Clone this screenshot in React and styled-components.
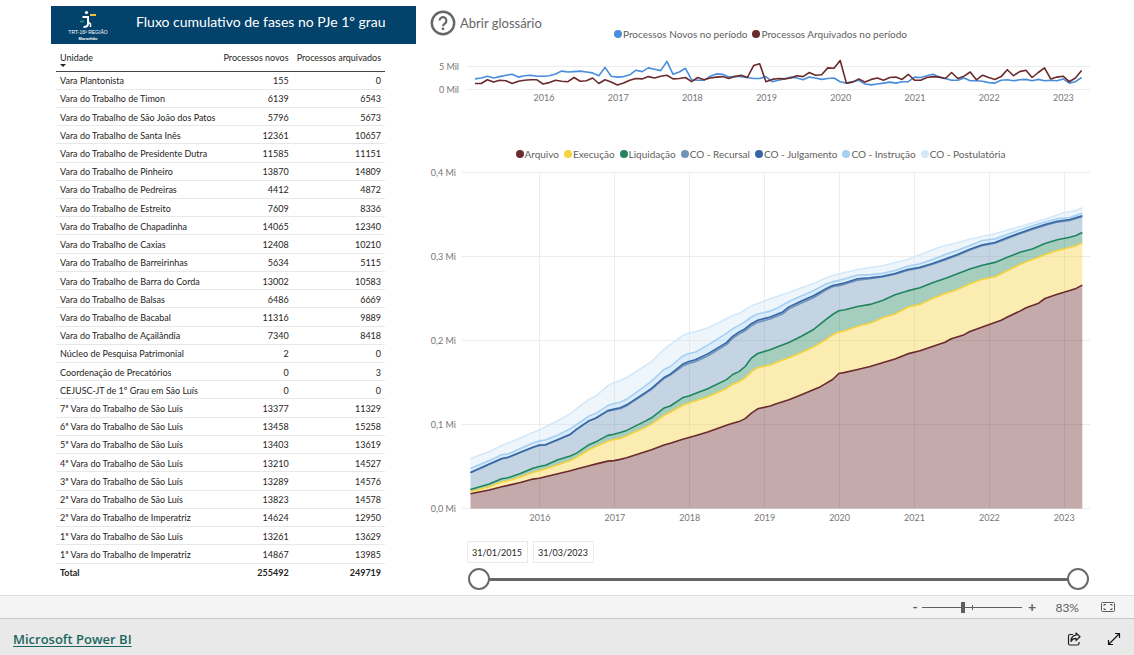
import React, { useState } from "react";
import styled, { createGlobalStyle } from "styled-components";

const units = [
  ["Vara Plantonista", 155, 0],
  ["Vara do Trabalho de Timon", 6139, 6543],
  ["Vara do Trabalho de São João dos Patos", 5796, 5673],
  ["Vara do Trabalho de Santa Inês", 12361, 10657],
  ["Vara do Trabalho de Presidente Dutra", 11585, 11151],
  ["Vara do Trabalho de Pinheiro", 13870, 14809],
  ["Vara do Trabalho de Pedreiras", 4412, 4872],
  ["Vara do Trabalho de Estreito", 7609, 8336],
  ["Vara do Trabalho de Chapadinha", 14065, 12340],
  ["Vara do Trabalho de Caxias", 12408, 10210],
  ["Vara do Trabalho de Barreirinhas", 5634, 5115],
  ["Vara do Trabalho de Barra do Corda", 13002, 10583],
  ["Vara do Trabalho de Balsas", 6486, 6669],
  ["Vara do Trabalho de Bacabal", 11316, 9889],
  ["Vara do Trabalho de Açailândia", 7340, 8418],
  ["Núcleo de Pesquisa Patrimonial", 2, 0],
  ["Coordenação de Precatórios", 0, 3],
  ["CEJUSC-JT de 1º Grau em São Luís", 0, 0],
  ["7ª Vara do Trabalho de São Luís", 13377, 11329],
  ["6ª Vara do Trabalho de São Luís", 13458, 15258],
  ["5ª Vara do Trabalho de São Luís", 13403, 13619],
  ["4ª Vara do Trabalho de São Luís", 13210, 14527],
  ["3ª Vara do Trabalho de São Luís", 13289, 14576],
  ["2ª Vara do Trabalho de São Luís", 13823, 14578],
  ["2ª Vara do Trabalho de Imperatriz", 14624, 12950],
  ["1ª Vara do Trabalho de São Luís", 13261, 13629],
  ["1ª Vara do Trabalho de Imperatriz", 14867, 13985],
];

const years = [2016, 2017, 2018, 2019, 2020, 2021, 2022, 2023];

// thousands per month, jan/2015 to mar/2023
const novos = [
  2.3, 2.5, 2.9, 2.5, 2.8, 3.1, 3.3, 2.7, 3.0, 3.1, 2.9, 2.9, 3.0, 3.4, 4.0, 3.8, 3.9, 4.0, 3.8, 3.6,
  3.0, 4.8, 2.9, 2.7, 2.8, 3.2, 4.2, 3.9, 4.7, 4.4, 4.1, 6.1, 3.3, 3.8, 4.6, 2.1, 2.0, 2.0, 2.9, 3.4,
  3.3, 2.7, 2.9, 2.8, 2.6, 2.4, 2.4, 2.8, 1.7, 2.0, 2.3, 2.7, 2.5, 2.1, 2.7, 2.5, 2.2, 2.4, 2.5, 1.7,
  1.4, 1.7, 2.0, 1.2, 1.0, 1.2, 1.4, 1.6, 1.4, 1.7, 1.7, 2.7, 2.6, 3.0, 3.3, 2.7, 2.4, 2.0, 2.0, 2.5,
  1.9, 1.9, 1.8, 1.5, 1.4, 2.0, 2.1, 1.9, 2.1, 2.2, 1.9, 2.2, 1.9, 2.0, 1.9, 2.3, 1.4, 1.7, 2.6,
];
const arquivados = [
  1.3, 1.3, 2.1, 1.6, 2.0, 1.9, 1.3, 1.8, 2.0, 2.1, 2.1, 1.2, 1.5, 2.0, 1.8, 1.7, 2.6, 1.8, 1.9, 2.5,
  1.3, 2.1, 1.6, 1.0, 1.4, 2.0, 2.4, 2.3, 2.8, 2.5, 2.9, 3.1, 2.3, 2.4, 2.6, 1.7, 2.6, 2.1, 2.5, 2.7,
  2.8, 2.4, 2.8, 3.1, 2.6, 5.2, 5.6, 1.7, 2.2, 2.4, 2.3, 2.5, 3.0, 2.8, 3.7, 3.1, 3.2, 4.7, 4.6, 6.3,
  1.4, 1.6, 2.3, 1.6, 2.2, 2.5, 2.0, 2.6, 2.7, 2.2, 3.3, 2.0, 2.0, 2.6, 2.8, 2.7, 2.4, 3.7, 2.4, 2.9,
  3.8, 2.1, 3.1, 2.6, 2.2, 2.8, 4.3, 3.0, 3.9, 4.2, 2.6, 3.7, 4.7, 2.3, 2.7, 2.9, 1.7, 2.5, 4.1,
];

// running totals in thousands, [month index, value], already stacked
const julgamento = [
  [0, 43], [3, 53], [5, 59.5], [6, 61], [8, 67], [10, 73], [11, 75.5], [12, 76], [14, 82], [16, 88.5],
  [17, 94.5], [19, 104.5], [20, 107.5], [22, 116.5], [23, 118.5], [24, 120], [25, 123.5], [28, 138],
  [29, 143], [31, 156], [32, 160], [34, 172], [35, 175], [36, 177], [38, 184], [41, 197.5], [42, 205],
  [43, 210], [44, 214], [45, 220], [46, 224], [48, 228], [49, 231], [50, 234], [51, 240], [53, 247],
  [55, 253.6], [57, 262], [58, 265.5], [59, 267], [60, 268.7], [62, 273.4], [64, 274.6], [66, 276.6],
  [68, 279.8], [70, 284.5], [72, 287.3], [74, 291.7], [76, 297], [78, 302.4], [80, 308.7], [82, 314],
  [84, 316.7], [86, 322.6], [88, 328], [90, 333.3], [92, 338], [94, 342], [96, 344], [98, 348.4],
];
const recursalGap = (m) => (m < 23 ? 0.5 : m < 34 ? 1.2 : m < 57 ? 2.4 : m < 63 ? 1.6 : 1);

const phases = [
  {
    name: "Arquivo",
    color: "#6b2a2c",
    points: [
      [0, 17.5], [3, 22], [5, 26], [6, 27.5], [8, 31], [10, 35], [11, 36], [12, 37.7], [14, 41.3], [16, 45],
      [17, 47], [19, 51], [20, 52.8], [22, 56.4], [23, 57], [24, 58.5], [25, 60.3], [28, 67.5], [29, 70],
      [31, 75.5], [32, 77.7], [34, 82.5], [35, 84.5], [36, 86.5], [38, 91], [41, 99], [42, 101.5],
      [43, 103.5], [44, 107], [45, 113.5], [46, 118.7], [48, 122], [49, 124.6], [51, 129.4], [53, 135.3],
      [55, 141.7], [56, 144.8], [58, 153.6], [59, 160.7], [60, 162], [62, 165.5], [64, 169], [66, 173.4],
      [68, 178], [70, 184], [72, 187.7], [74, 193], [76, 198], [77, 202], [79, 206.7], [80, 210.7],
      [82, 216], [84, 221.4], [85, 224], [86, 228], [88, 235], [89, 239], [91, 244.4], [92, 250],
      [94, 255], [96, 259.5], [97, 262], [98, 266],
    ],
  },
  {
    name: "Execução",
    color: "#f5d33f",
    points: [
      [0, 20], [3, 26], [5, 31.5], [6, 33], [8, 37.5], [10, 43], [11, 45], [12, 47], [14, 52], [16, 57],
      [17, 61], [19, 70], [20, 73.5], [22, 80], [23, 82], [24, 83.5], [25, 86.5], [28, 96.5], [29, 100.5],
      [31, 111], [32, 114.5], [34, 123], [35, 125.5], [36, 128], [38, 133], [41, 143], [42, 148],
      [43, 151], [44, 155.5], [45, 163], [46, 167.5], [48, 171], [49, 174], [51, 179.4], [53, 185.7],
      [55, 192.5], [57, 201.6], [58, 206.7], [59, 210], [60, 211.5], [62, 217], [64, 220.6], [66, 227],
      [68, 231.5], [70, 239.7], [72, 243], [74, 250], [76, 256], [78, 260.7], [80, 267.5], [82, 273],
      [84, 276], [86, 283], [88, 290.5], [89, 293.7], [91, 299], [92, 302], [94, 307], [96, 310.7],
      [97, 312.7], [98, 316.2],
    ],
  },
  {
    name: "Liquidação",
    color: "#20845f",
    points: [
      [0, 22.5], [3, 29], [5, 35.5], [6, 36.5], [8, 41.5], [10, 48], [11, 50], [12, 51.5], [14, 58],
      [16, 62.5], [17, 66], [19, 76], [20, 79], [22, 87], [23, 88.5], [24, 90.5], [25, 93], [28, 104],
      [29, 108], [31, 119.5], [32, 122], [34, 132], [35, 134], [36, 137], [38, 142.5], [41, 153.5],
      [42, 159.5], [43, 163], [44, 169], [45, 179], [46, 184.5], [48, 189], [49, 192], [51, 197.6],
      [53, 205], [55, 213.5], [57, 225.4], [58, 231], [59, 235.3], [60, 236.5], [62, 240.5], [64, 243],
      [66, 247.6], [68, 254.4], [70, 259], [72, 262.7], [74, 268.7], [76, 273.8], [78, 279.4], [80, 285],
      [82, 289.7], [84, 293], [86, 299], [88, 305], [90, 309], [92, 315.5], [94, 320], [96, 323],
      [97, 325], [98, 328.6],
    ],
  },
  {
    name: "CO - Recursal",
    color: "#6f94b8",
    points: julgamento.map(([m, v]) => [m, v - recursalGap(m)]),
  },
  { name: "CO - Julgamento", color: "#3667a6", points: julgamento },
  {
    name: "CO - Instrução",
    color: "#a5cff3",
    points: [
      [0, 47.6], [3, 57], [5, 64], [6, 65], [8, 71.5], [10, 78], [11, 80.5], [12, 81.5], [14, 87.5],
      [16, 95], [17, 100], [19, 110], [20, 113], [22, 122.5], [23, 125], [24, 126.5], [25, 130],
      [28, 146], [29, 151.5], [31, 165.5], [32, 169], [34, 181.5], [35, 184.5], [36, 186], [38, 194.5],
      [41, 208.5], [42, 214], [43, 218], [44, 222.5], [45, 228], [46, 231.5], [48, 235], [49, 238],
      [51, 246.4], [53, 252.8], [55, 259.5], [57, 267.5], [58, 269.8], [60, 273.4], [62, 278], [64, 278.4],
      [66, 280], [68, 283.3], [70, 288.5], [72, 291.3], [74, 296.4], [76, 302.4], [78, 307.5], [80, 313],
      [82, 319], [84, 321], [86, 326.6], [88, 331.7], [90, 336.5], [92, 341], [94, 345], [96, 346.4],
      [98, 351.6],
    ],
  },
  {
    name: "CO - Postulatória",
    color: "#d5e8f8",
    points: [
      [0, 59.5], [3, 67.5], [5, 75], [6, 78], [8, 84], [10, 90.5], [11, 93.5], [12, 97], [14, 104.5],
      [16, 113], [17, 119], [19, 130], [20, 133.5], [22, 146], [23, 150], [24, 152.5], [25, 156],
      [28, 170], [29, 175], [31, 189.5], [32, 195], [34, 206], [35, 209], [36, 210.5], [38, 215],
      [40, 222], [41, 226], [42, 230], [43, 232], [44, 236.5], [45, 241], [46, 244], [48, 249.6],
      [51, 257], [53, 262.7], [55, 268], [57, 274.6], [59, 279], [62, 284.5], [66, 289], [70, 296.4],
      [72, 302], [75, 310.7], [80, 320.6], [84, 327], [88, 335.7], [92, 344.4], [95, 352], [97, 354.8],
      [98, 358],
    ],
  },
];

const toPath = (pts) => pts.map(([x, y]) => `${x.toFixed(1)} ${y.toFixed(1)}`).join("L");

function MonthlyChart() {
  const x = (m) => 45 + m * 6.19;
  const y = (v) => 47.5 - v * 4.6;
  const line = (data) => "M" + toPath(data.map((v, m) => [x(m), y(v)]));
  return (
    <Chart viewBox="0 0 661 66" role="img" aria-label="Processos novos e arquivados por mês">
      {[0, 5].map((v) => (
        <g key={v}>
          <line x1="37" x2="660" y1={Math.floor(y(v)) + 0.5} y2={Math.floor(y(v)) + 0.5} />
          <text x="29" y={y(v) + 3} textAnchor="end">{v} Mil</text>
        </g>
      ))}
      {years.map((year, i) => (
        <text key={year} x={114 + i * 74.2} y="59" textAnchor="middle">{year}</text>
      ))}
      <path d={line(novos)} stroke="#4a8ddc" />
      <path d={line(arquivados)} stroke="#6b2a2c" />
    </Chart>
  );
}

function PhasesChart() {
  const x = (m) => 40.5 + m * 6.243;
  const y = (v) => 344.5 - v * 0.84;
  const curves = phases.map((p) => p.points.map(([m, v]) => [x(m), y(v)]));
  const base = [[x(0), y(0)], [x(98), y(0)]];
  return (
    <Chart viewBox="0 0 661 362" role="img" aria-label="Fluxo cumulativo por fase">
      {[0, 100, 200, 300, 400].map((v) => (
        <g key={v}>
          <line x1="32" x2="660" y1={Math.floor(y(v)) + 0.5} y2={Math.floor(y(v)) + 0.5} />
          <text x="26" y={y(v) + 3} textAnchor="end">0,{v / 100} Mi</text>
        </g>
      ))}
      {years.map((year, i) => (
        <g key={year}>
          <line x1={Math.floor(109.6 + i * 74.95) + 0.5} x2={Math.floor(109.6 + i * 74.95) + 0.5} y1="8" y2="344" />
          <text x={110 + i * 74.9} y="357" textAnchor="middle">{year}</text>
        </g>
      ))}
      {phases.map((p, i) => {
        const below = i ? curves[i - 1] : base;
        return (
          <path
            key={p.name}
            className="area"
            d={`M${toPath(curves[i])}L${toPath([...below].reverse())}Z`}
            fill={p.color}
          />
        );
      })}
      {phases.map((p, i) => (
        <path key={p.name} d={"M" + toPath(curves[i])} stroke={p.color} />
      ))}
    </Chart>
  );
}

function Legend({ items }) {
  return (
    <LegendList>
      {items.map((item) => (
        <LegendItem key={item.name} $color={item.color}>{item.name}</LegendItem>
      ))}
    </LegendList>
  );
}

function Logo() {
  return (
    <svg width="40" height="32" viewBox="0 0 40 32" aria-hidden="true">
      <circle cx="18.5" cy="3.5" r="1.6" fill="#fff" />
      <path d="M14.500 8h5.500v6.500q0 3.500-4.500 3.500" fill="none" stroke="#fff" strokeWidth="2" />
      <path d="M20 12.500l2.500 2.500v3" fill="none" stroke="#fff" strokeWidth="1.500" />
      <path d="M22 6h6" stroke="#f2c230" strokeWidth="2" />
      <path d="M12 12.500h4" stroke="#2e9a78" strokeWidth="1.500" />
      <LogoText x="20" y="25" $size={5}>TRT-16ª REGIÃO</LogoText>
      <LogoText x="20" y="31" $size={4} $bold>Maranhão</LogoText>
    </svg>
  );
}

function App() {
  const [start, setStart] = useState(0);
  const [end, setEnd] = useState(98);
  const [zoom, setZoom] = useState(41);

  return (
    <Page>
      <GlobalStyle />
      <Report>
        <Side>
          <Banner>
            <Logo />
            <h1>Fluxo cumulativo de fases no PJe 1º grau</h1>
          </Banner>
          <Units>
            <colgroup>
              <col width="50%" />
              <col width="22%" />
              <col width="28%" />
            </colgroup>
            <thead>
              <tr>
                <th aria-sort="descending">
                  Unidade
                  <svg width="6" height="3" viewBox="0 0 6 3" aria-hidden="true">
                    <path d="M0 0h6L3 3z" fill="#252423" />
                  </svg>
                </th>
                <th>Processos novos</th>
                <th>Processos arquivados</th>
              </tr>
            </thead>
            <tbody>
              {units.map(([name, created, archived]) => (
                <tr key={name}>
                  <td>{name}</td>
                  <td>{created}</td>
                  <td>{archived}</td>
                </tr>
              ))}
            </tbody>
            <tfoot>
              <tr>
                <td>Total</td>
                <td>255492</td>
                <td>249719</td>
              </tr>
            </tfoot>
          </Units>
        </Side>

        <Charts>
          <ChartsHead>
            <Glossary type="button">
              <svg width="26" height="26" viewBox="0 0 26 26" fill="none" stroke="#666" aria-hidden="true">
                <circle cx="13" cy="13" r="11.200" strokeWidth="2.400" />
                <path d="M9.600 10.600a3.400 3.400 0 1 1 5.400 2.700q-2 1.300-2 2.900" strokeWidth="2.200" />
                <path d="M13 17.600v2.400" strokeWidth="2.400" />
              </svg>
              Abrir glossário
            </Glossary>
            <Legend
              items={[
                { name: "Processos Novos no período", color: "#4a8ddc" },
                { name: "Processos Arquivados no período", color: "#6b2a2c" },
              ]}
            />
          </ChartsHead>
          <MonthlyChart />
          <PhasesBlock>
            <Legend items={phases} />
            <PhasesChart />
          </PhasesBlock>
          <Period>
            <Dates>
              <DateInput aria-label="Data inicial" defaultValue="31/01/2015" />
              <DateInput aria-label="Data final" defaultValue="31/03/2023" />
            </Dates>
            <RangeTrack>
              <RangeInput
                type="range"
                aria-label="Início do período"
                max="98"
                value={start}
                onChange={(e) => setStart(Math.min(+e.target.value, end))}
              />
              <RangeInput
                type="range"
                aria-label="Fim do período"
                max="98"
                value={end}
                onChange={(e) => setEnd(Math.max(+e.target.value, start))}
              />
            </RangeTrack>
          </Period>
        </Charts>
      </Report>

      <ZoomBar>
        <ZoomButton type="button" aria-label="Reduzir" onClick={() => setZoom(Math.max(0, zoom - 5))}>-</ZoomButton>
        <ZoomRange
          type="range"
          aria-label="Zoom"
          value={zoom}
          onChange={(e) => setZoom(+e.target.value)}
        />
        <ZoomButton type="button" aria-label="Ampliar" onClick={() => setZoom(Math.min(100, zoom + 5))}>+</ZoomButton>
        <ZoomValue>83%</ZoomValue>
        <IconButton type="button" aria-label="Ajustar à página">
          <svg width="16" height="12" viewBox="0 0 16 12" fill="none" stroke="#605e5c">
            <rect x="1.500" y="1.500" width="13" height="9" rx="1" />
            <path d="M4 5V3.500h2M10 3.500h2V5M12 7v1.500h-2M6 8.500H4V7" />
          </svg>
        </IconButton>
      </ZoomBar>

      <Footer>
        <a href="#powerbi">Microsoft Power BI</a>
        <IconButton type="button" aria-label="Compartilhar">
          <svg width="14" height="14" viewBox="0 0 14 14" fill="none" stroke="#222" strokeWidth="1.200">
            <path d="M6 2.500H3Q1.500 2.500 1.500 4v7.500Q1.500 13 3 13h7.500q1.500 0 1.500-1.500V10" />
            <path d="M9 1l4 3.800L9 8.500V6.400Q5.500 6.300 4 9.500q0-5.800 5-6.300z" strokeLinejoin="round" />
          </svg>
        </IconButton>
        <IconButton type="button" aria-label="Tela cheia">
          <svg width="14" height="14" viewBox="0 0 14 14" fill="none" stroke="#111" strokeWidth="1.200">
            <path d="M1.500 12.500l11-11M8 1.500h4.500V6M6 12.500H1.500V8" />
          </svg>
        </IconButton>
      </Footer>
    </Page>
  );
}

const GlobalStyle = createGlobalStyle`
  * {
    box-sizing: border-box;
  }
  body {
    margin: 0;
    background: #fff;
    font-family: Lato, "Open Sans", sans-serif;
  }
  button, input {
    font-family: inherit;
    margin: 0;
  }
  button {
    padding: 0;
    border: none;
    background: none;
    cursor: pointer;
  }
`;

const Page = styled.div`
  display: flex;
  flex-direction: column;
  min-height: 100vh;
`;

const Report = styled.main`
  flex: 1;
  display: grid;
  grid-template-columns: minmax(0, 365fr) minmax(0, 661fr);
  column-gap: 14px;
  padding: 6px 43px 4px 51px;
`;

const Side = styled.section`
  display: grid;
  grid-template-rows: auto 1fr;
  padding-bottom: 10px;
`;

const Banner = styled.header`
  display: flex;
  align-items: center;
  gap: 28px;
  height: 38px;
  padding-left: 17px;
  background: #02426b;
  h1 {
    margin: 0 0 8px;
    color: #fff;
    font-size: 14px;
    font-weight: 400;
    white-space: nowrap;
  }
`;

const LogoText = styled.text`
  fill: #fff;
  font-family: "Liberation Sans", sans-serif;
  font-size: ${(p) => p.$size}px;
  font-weight: ${(p) => (p.$bold ? 700 : 400)};
  text-anchor: middle;
`;

const Units = styled.table`
  margin: 6px 31px 0 5px;
  table-layout: fixed;
  border-collapse: collapse;
  color: #252423;
  font-size: 9px;
  line-height: 12px;
  th,
  td {
    padding: 2px 4px 0;
    text-align: right;
    font-weight: 400;
    white-space: nowrap;
  }
  th:first-child,
  td:first-child {
    text-align: left;
  }
  th {
    height: 21px;
    vertical-align: top;
    border-bottom: 1px solid #44464f;
    svg {
      display: block;
    }
  }
  tbody td {
    border-bottom: 1px solid #e8e8e8;
  }
  tfoot td {
    height: 18px;
    border-top: 1px solid #34385a;
    font-weight: 700;
  }
`;

const Charts = styled.section`
  display: flex;
  flex-direction: column;
`;

const ChartsHead = styled.div`
  display: grid;
  grid-template-columns: 1fr auto 1fr;
  align-items: end;
  height: 36px;
`;

const Glossary = styled.button`
  display: flex;
  align-items: center;
  justify-self: start;
  align-self: start;
  gap: 4px;
  padding-top: 4px;
  color: #666;
  font-size: 13px;
`;

const LegendList = styled.ul`
  display: flex;
  justify-content: center;
  gap: 5px;
  margin: 0;
  padding: 0;
  list-style: none;
  color: #605e5c;
  font-size: 10px;
  line-height: 16px;
  white-space: nowrap;
`;

const LegendItem = styled.li`
  display: flex;
  align-items: center;
  gap: 1px;
  &::before {
    content: "";
    width: 8px;
    height: 8px;
    border-radius: 50%;
    background: ${(p) => p.$color};
  }
`;

const Chart = styled.svg`
  display: block;
  width: 100%;
  height: auto;
  line {
    stroke: #ececec;
  }
  text {
    fill: #777;
    font-size: 9px;
  }
  path {
    fill: none;
    stroke-width: 1.6;
    stroke-linejoin: round;
  }
  path.area {
    fill: revert-layer;
    fill-opacity: 0.4;
  }
`;

const PhasesBlock = styled.div`
  margin-top: 38px;
  ${LegendList} {
    margin-bottom: 2px;
  }
`;

const Period = styled.div`
  margin-top: 15px;
  padding-left: 37px;
`;

const Dates = styled.div`
  display: flex;
  gap: 5px;
`;

const DateInput = styled.input`
  width: 61px;
  height: 22px;
  padding: 0 4px;
  border: 1px solid #eaeaea;
  background: #fff;
  color: #252423;
  font-size: 9px;
`;

const RangeTrack = styled.div`
  display: grid;
  align-items: center;
  height: 22px;
  margin: 5px 2px 0 1px;
  background: linear-gradient(#666, #666) center / calc(100% - 20px) 3px no-repeat;
`;

const RangeInput = styled.input`
  grid-area: 1 / 1;
  width: 100%;
  height: 22px;
  appearance: none;
  background: none;
  pointer-events: none;
  &::-webkit-slider-thumb {
    appearance: none;
    width: 22px;
    height: 22px;
    border: 2px solid #6b6b6b;
    border-radius: 50%;
    background: #fff;
    pointer-events: auto;
  }
`;

const ZoomBar = styled.div`
  display: flex;
  align-items: center;
  justify-content: flex-end;
  height: 23px;
  padding-right: 18px;
  border-top: 1px solid #dedede;
  background: #f4f4f4;
  color: #605e5c;
`;

const ZoomButton = styled.button`
  width: 14px;
  color: #605e5c;
  font-size: 14px;
  font-weight: 700;
  line-height: 20px;
`;

const ZoomRange = styled.input`
  width: 100px;
  height: 12px;
  margin: 0 3px 0 0;
  appearance: none;
  background:
    linear-gradient(#605e5c, #605e5c) 50px center / 1px 5px no-repeat,
    linear-gradient(#605e5c, #605e5c) center / 100% 1px no-repeat;
  &::-webkit-slider-thumb {
    appearance: none;
    width: 4px;
    height: 11px;
    background: #605e5c;
  }
`;

const ZoomValue = styled.span`
  width: 40px;
  margin: 0 21px 0 0;
  font-size: 12px;
  text-align: right;
`;

const IconButton = styled.button`
  display: flex;
`;

const Footer = styled.footer`
  display: flex;
  align-items: center;
  gap: 26px;
  height: 37px;
  padding: 3px 13px 0;
  border-top: 1px solid #c8c8c8;
  background: #e9e9e9;
  a {
    margin-right: auto;
    color: #1b675f;
    font-family: "Open Sans", sans-serif;
    font-size: 13px;
    font-weight: 600;
    text-underline-offset: 2px;
  }
`;

export default App;
